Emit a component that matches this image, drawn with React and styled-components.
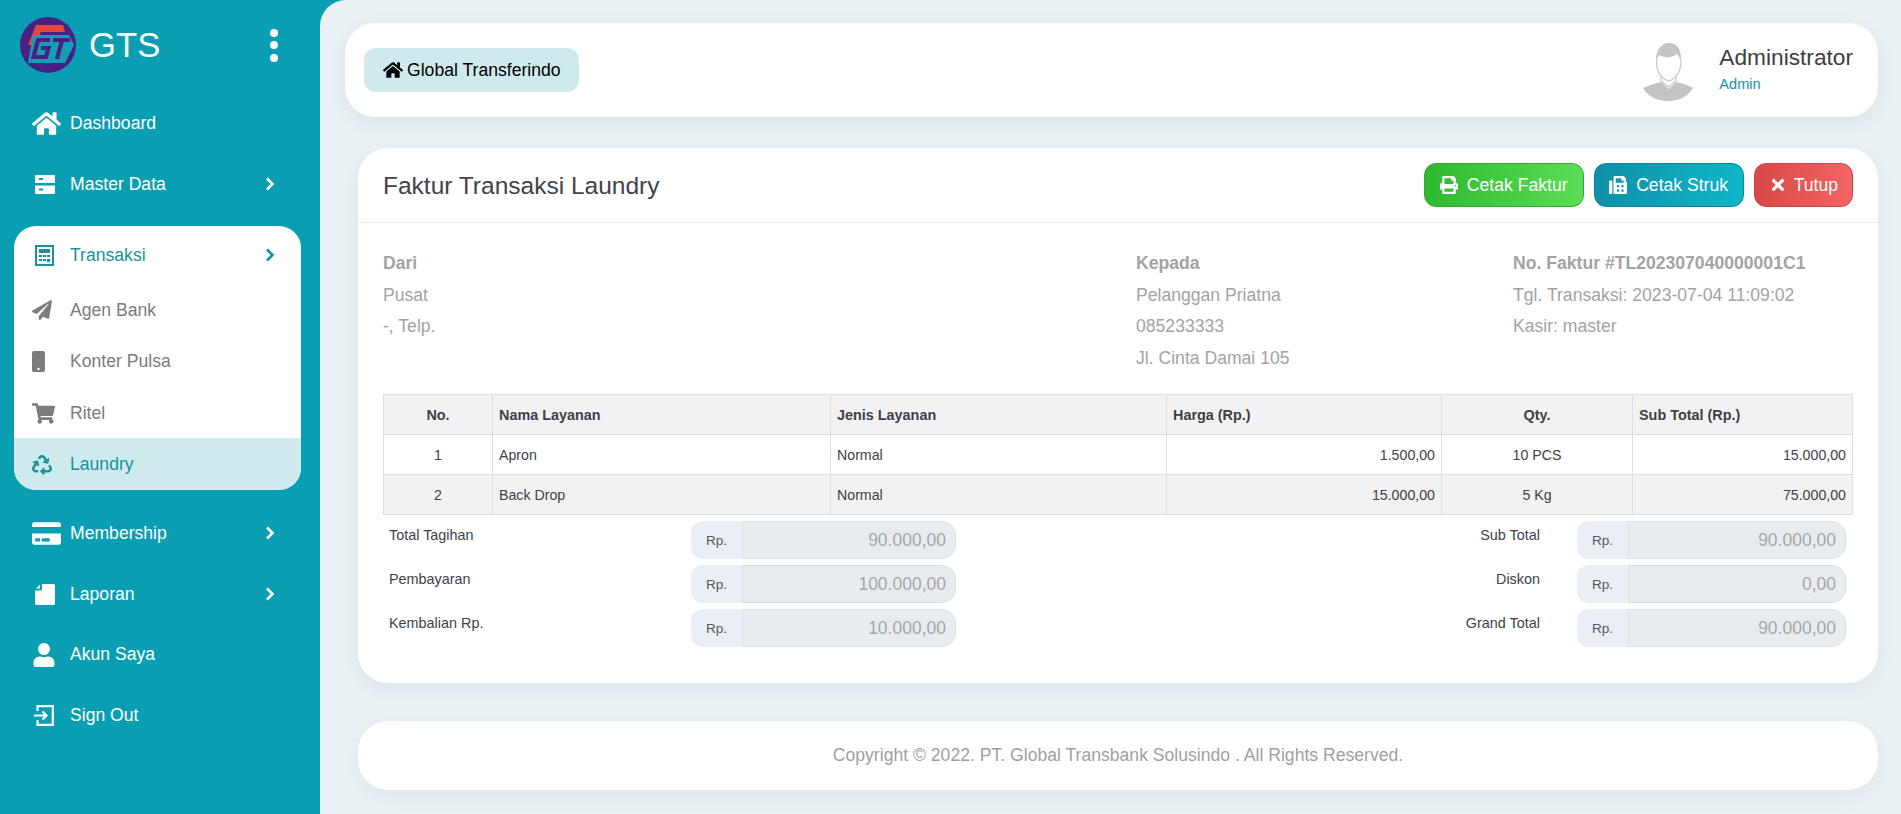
import React from "react";
import styled, { createGlobalStyle } from "styled-components";
import { FaHome, FaPaperPlane, FaShoppingCart, FaRecycle, FaCreditCard, FaUser, FaPrint, FaFax, FaTimes } from "react-icons/fa";

const Global = createGlobalStyle`
  html, body { margin: 0; padding: 0; background: #099eb1; }
  * { box-sizing: border-box; }
  body { font-family: "Liberation Sans", Arial, sans-serif; }
`;

const Shell = styled.div`
  display: flex;
  width: 1901px;
  height: 814px;
  background: #099eb1;
  overflow: hidden;
`;
const Sidebar = styled.aside`
  width: 320px;
  flex: none;
  display: flex;
  flex-direction: column;
  color: #fff;
`;
const Brand = styled.div`
  height: 90px;
  display: flex;
  align-items: center;
  padding: 0 42px 0 20px;
  gap: 13px;
`;
const BrandName = styled.span`
  font-size: 34.7px;
  flex: 1;
`;
const Kebab = styled.div`
  display: flex;
  flex-direction: column;
  gap: 4.5px;
`;
const Dot = styled.i`
  width: 8px;
  height: 8px;
  border-radius: 50%;
  background: #fff;
`;
const Nav = styled.nav`
  display: flex;
  flex-direction: column;
  padding-top: 2px;
`;
const NavItem = styled.div`
  height: 60.7px;
  display: flex;
  align-items: center;
  padding: 2px 45px 0 32px;
  font-size: 17.6px;
  color: #fff;
`;
const IconSlot = styled.span`
  width: 38px;
  flex: none;
  display: flex;
  align-items: center;
  padding-left: ${(p) => p.$inset || 0}px;
  svg { display: block; }
`;
const NavText = styled.span`
  flex: 1;
`;
const Group = styled.div`
  margin: 12.6px 19px 12px 14px;
  background: #fff;
  border-radius: 22px;
  overflow: hidden;
`;
const GroupHead = styled.div`
  height: 58px;
  display: flex;
  align-items: center;
  padding: 1px 26px 0 18px;
  font-size: 17.6px;
  color: #18929f;
`;
const SubItem = styled.div`
  height: 51.5px;
  display: flex;
  align-items: center;
  padding: 1px 26px 0 18px;
  font-size: 17.6px;
  color: ${(p) => (p.$active ? "#18929f" : "#7b7d7b")};
  background: ${(p) => (p.$active ? "#cfeaed" : "transparent")};
`;
const Main = styled.main`
  flex: 1;
  min-width: 0;
  background: #e9f1f5;
  border-top-left-radius: 26px;
  padding: 23px 23px 24px 25px;
  display: flex;
  flex-direction: column;
`;
const Topbar = styled.header`
  height: 94px;
  flex: none;
  background: #fff;
  border-radius: 30px;
  display: flex;
  align-items: center;
  justify-content: space-between;
  padding: 0 25px 0 19px;
  box-shadow: 0 6px 18px rgba(110, 150, 165, 0.14);
`;
const Crumb = styled.div`
  height: 44px;
  padding: 0 18px 0 19px;
  border-radius: 12px;
  background: #cfeaed;
  display: flex;
  align-items: center;
  gap: 4px;
  font-size: 17.6px;
  color: #000;
`;
const Profile = styled.div`
  display: flex;
  align-items: center;
  gap: 26px;
`;
const AvatarSlot = styled.div`
  margin-top: 4px;
  svg { display: block; }
`;
const ProfileText = styled.div`
  display: flex;
  flex-direction: column;
  gap: 5px;
  padding-bottom: 5px;
`;
const ProfileName = styled.span`
  font-size: 22.7px;
  color: #3b3e45;
`;
const ProfileRole = styled.span`
  font-size: 14.6px;
  color: #18929f;
`;
const Card = styled.section`
  height: 535px;
  flex: none;
  margin: 31px 0 0 13px;
  background: #fff;
  border-radius: 30px;
  box-shadow: 0 6px 18px rgba(110, 150, 165, 0.12);
`;
const CardHead = styled.div`
  height: 75px;
  display: flex;
  align-items: center;
  justify-content: space-between;
  padding: 0 25px;
  border-bottom: 1px solid #ececec;
`;
const CardTitle = styled.h1`
  margin: 2px 0 0;
  font-weight: 400;
  font-size: 24.5px;
  color: #3f434c;
`;
const Actions = styled.div`
  display: flex;
  gap: 10px;
`;
const ActionButton = styled.button`
  height: 44px;
  padding: 0 ${(p) => p.$pad}px;
  display: flex;
  align-items: center;
  gap: ${(p) => p.$gap}px;
  border-radius: 12px;
  border: 1px solid ${(p) => p.$edge};
  background: linear-gradient(90deg, ${(p) => p.$from}, ${(p) => p.$to});
  color: #fff;
  font: 17.6px "Liberation Sans", Arial, sans-serif;
`;
const CardBody = styled.div`
  padding: 25px 25px 0;
`;
const InvoiceInfo = styled.div`
  display: grid;
  grid-template-columns: 753px 377px 1fr;
  height: 146px;
  font-size: 17.6px;
  line-height: 31.7px;
  color: #a3a3a3;
`;
const InfoLine = styled.div`
  font-weight: ${(p) => (p.$bold ? 700 : 400)};
  white-space: nowrap;
`;
const Table = styled.table`
  width: 1469px;
  table-layout: fixed;
  border-collapse: collapse;
  font-size: 14.2px;
  color: #3e4148;
`;
const HeadCell = styled.th`
  height: 40px;
  padding: 0 6px;
  background: #f2f2f2;
  border: 1px solid #dedede;
  font-weight: 700;
  font-size: 14.4px;
  text-align: ${(p) => p.$align || "left"};
`;
const BodyRow = styled.tr`
  background: ${(p) => (p.$alt ? "#f2f2f2" : "#fff")};
`;
const BodyCell = styled.td`
  height: 40px;
  padding: 0 6px;
  border: 1px solid #dedede;
  text-align: ${(p) => p.$align || "left"};
`;
const Totals = styled.div`
  display: grid;
  grid-template-columns: 302px 265px 1fr 269px;
  grid-auto-rows: 38px;
  row-gap: 6px;
  margin: 6px 7px 0 6px;
`;
const LeftLabel = styled.div`
  font-size: 14.4px;
  line-height: 20px;
  padding-top: 4px;
  color: #3e4148;
`;
const RightLabel = styled(LeftLabel)`
  text-align: right;
  padding-right: 37px;
`;
const InputGroup = styled.div`
  display: flex;
  height: 100%;
`;
const Prefix = styled.span`
  width: ${(p) => p.$w}px;
  flex: none;
  display: flex;
  align-items: center;
  justify-content: center;
  font-size: 13.6px;
  color: #555a60;
  background: #e9eff5;
  border-radius: 12px 0 0 12px;
`;
const Amount = styled.input`
  flex: 1;
  min-width: 0;
  border: 1px solid #dde1e5;
  border-radius: 0 14px 14px 0;
  background: #e9ecef;
  padding: 0 9px;
  text-align: right;
  font: 17.5px "Liberation Sans", Arial, sans-serif;
  color: #a5a7a9;
  outline: none;
`;
const Footer = styled.footer`
  height: 69px;
  flex: none;
  margin: 38px 0 0 13px;
  background: #fff;
  border-radius: 30px;
  display: flex;
  align-items: center;
  justify-content: center;
  font-size: 17.6px;
  color: #a0a0a0;
  box-shadow: 0 6px 18px rgba(110, 150, 165, 0.1);
`;

const Chevron = () => (
  <svg width="10" height="14" viewBox="0 0 10 14" fill="none">
    <path d="M2 1.5 7.5 7 2 12.5" stroke="currentColor" strokeWidth="2.6" />
  </svg>
);
const Logo = () => (
  <svg width="56" height="56" viewBox="0 0 56 56">
    <circle cx="28" cy="28" r="28" fill="#472184" />
    <path d="M16 8H43L45 15H21L14 28H8Z" fill="#e4473f" />
    <path d="M13 18H49L54 28L45 46H8Z" fill="#149db3" />
    <path d="M30 23H18L13.5 40H26L28.5 31H21" fill="none" stroke="#472184" strokeWidth="4.2" />
    <path d="M33 23H50M42 23L37 42" fill="none" stroke="#472184" strokeWidth="4.2" />
  </svg>
);
const Avatar = () => (
  <svg width="50" height="58" viewBox="13 8 50 58" fill="#c4c4c4">
    <path d="M26 28C25 14 32 8 39 8C47 8 52 14 51 28C50 24 49 21 47 19C42 23 34 23 29 20C27 22 27 25 26 28Z" />
    <path d="M26.5 26C26 36 31 44 39 46C46 44 51 36 51 26" fill="none" stroke="#c4c4c4" strokeWidth="1.2" />
    <path d="M31 41V46L39 52L46 46V41" fill="none" stroke="#c4c4c4" strokeWidth="1.2" />
    <path d="M13 53C20 50 26 48 31 47L39 54L46 47C52 48 58 50 63 53C58 62 48 66 38 66C28 66 18 62 13 53Z" />
  </svg>
);
const ServerIcon = () => (
  <svg width="20" height="19" viewBox="0 0 20 19" fill="#fff">
    <path fillRule="evenodd" d="M1 0H19A1 1 0 0 1 20 1V8H0V1A1 1 0 0 1 1 0ZM4 3V5H8V3ZM0 10.5H20V18A1 1 0 0 1 19 19H1A1 1 0 0 1 0 18ZM4 13.5V15.5H8V13.5Z" />
  </svg>
);
const CalcIcon = () => (
  <svg width="20" height="21" viewBox="0 0 20 21" fill="currentColor">
    <path fillRule="evenodd" d="M0 0H19V21H0ZM2 2V19H17V2ZM4 4H15V8H4ZM4 10H7V12H4ZM8 10H11V12H8ZM12 10H15V12H12ZM4 14H7V16H4ZM8 14H11V16H8ZM12 14H15V17H12Z" />
  </svg>
);
const PhoneIcon = () => (
  <svg width="13" height="21" viewBox="0 0 13 21" fill="currentColor">
    <path fillRule="evenodd" d="M2 0H11A2 2 0 0 1 13 2V19A2 2 0 0 1 11 21H2A2 2 0 0 1 0 19V2A2 2 0 0 1 2 0ZM6.5 16.8A1.2 1.2 0 1 0 6.5 19.2A1.2 1.2 0 1 0 6.5 16.8Z" />
  </svg>
);
const FileIcon = () => (
  <svg width="20" height="21" viewBox="0 0 20 21" fill="#fff">
    <path d="M7 0H18.5A1.5 1.5 0 0 1 20 1.5V19.5A1.5 1.5 0 0 1 18.5 21H1.5A1.5 1.5 0 0 1 0 19.5V6.5H5.5A1.5 1.5 0 0 0 7 5ZM5 .8V4.5H1Z" />
  </svg>
);
const SignInIcon = () => (
  <svg width="20" height="21" viewBox="0 0 20 21" fill="none" stroke="#fff" strokeWidth="2.2">
    <path d="M3.5 6V1.2H18.8V19.8H3.5V15" />
    <path d="M0 10.5H12M8.5 6.5 12.5 10.5 8.5 14.5" />
  </svg>
);

const items = [
  ["Apron", "Normal", "1.500,00", "10 PCS", "15.000,00"],
  ["Back Drop", "Normal", "15.000,00", "5 Kg", "75.000,00"],
];
const columns = [109, 338, 336, 275, 191, 220];

const TotalsRow = ({ left, leftValue, right, rightValue }) => (
  <>
    <LeftLabel>{left}</LeftLabel>
    <InputGroup>
      <Prefix $w={51}>Rp.</Prefix>
      <Amount readOnly value={leftValue} />
    </InputGroup>
    <RightLabel>{right}</RightLabel>
    <InputGroup>
      <Prefix $w={51}>Rp.</Prefix>
      <Amount readOnly value={rightValue} />
    </InputGroup>
  </>
);

export default function App() {
  return (
    <Shell>
      <Global />
      <Sidebar>
        <Brand>
          <Logo />
          <BrandName>GTS</BrandName>
          <Kebab><Dot /><Dot /><Dot /></Kebab>
        </Brand>
        <Nav>
          <NavItem><IconSlot><FaHome size={29} /></IconSlot><NavText>Dashboard</NavText></NavItem>
          <NavItem><IconSlot $inset={3}><ServerIcon /></IconSlot><NavText>Master Data</NavText><Chevron /></NavItem>
          <Group>
            <GroupHead><IconSlot $inset={3}><CalcIcon /></IconSlot><NavText>Transaksi</NavText><Chevron /></GroupHead>
            <SubItem><IconSlot><FaPaperPlane size={20} /></IconSlot><NavText>Agen Bank</NavText></SubItem>
            <SubItem><IconSlot><PhoneIcon /></IconSlot><NavText>Konter Pulsa</NavText></SubItem>
            <SubItem><IconSlot><FaShoppingCart size={23} /></IconSlot><NavText>Ritel</NavText></SubItem>
            <SubItem $active><IconSlot><FaRecycle size={20} /></IconSlot><NavText>Laundry</NavText></SubItem>
          </Group>
          <NavItem><IconSlot><FaCreditCard size={29} /></IconSlot><NavText>Membership</NavText><Chevron /></NavItem>
          <NavItem><IconSlot $inset={3}><FileIcon /></IconSlot><NavText>Laporan</NavText><Chevron /></NavItem>
          <NavItem><IconSlot><FaUser size={24} /></IconSlot><NavText>Akun Saya</NavText></NavItem>
          <NavItem><IconSlot $inset={2}><SignInIcon /></IconSlot><NavText>Sign Out</NavText></NavItem>
        </Nav>
      </Sidebar>
      <Main>
        <Topbar>
          <Crumb><FaHome size={20} />Global Transferindo</Crumb>
          <Profile>
            <AvatarSlot><Avatar /></AvatarSlot>
            <ProfileText>
              <ProfileName>Administrator</ProfileName>
              <ProfileRole>Admin</ProfileRole>
            </ProfileText>
          </Profile>
        </Topbar>
        <Card>
          <CardHead>
            <CardTitle>Faktur Transaksi Laundry</CardTitle>
            <Actions>
              <ActionButton $pad={15} $gap={9} $from="#2fb92f" $to="#5ade55" $edge="#35a535"><FaPrint size={18} />Cetak Faktur</ActionButton>
              <ActionButton $pad={14.6} $gap={9} $from="#0f90a6" $to="#0fb6ca" $edge="#0d8599"><FaFax size={18} />Cetak Struk</ActionButton>
              <ActionButton $pad={14} $gap={7} $from="#d94848" $to="#f36464" $edge="#c94545"><FaTimes size={18} />Tutup</ActionButton>
            </Actions>
          </CardHead>
          <CardBody>
            <InvoiceInfo>
              <div>
                <InfoLine $bold>Dari</InfoLine>
                <InfoLine>Pusat</InfoLine>
                <InfoLine>-, Telp.</InfoLine>
              </div>
              <div>
                <InfoLine $bold>Kepada</InfoLine>
                <InfoLine>Pelanggan Priatna</InfoLine>
                <InfoLine>085233333</InfoLine>
                <InfoLine>Jl. Cinta Damai 105</InfoLine>
              </div>
              <div>
                <InfoLine $bold>No. Faktur #TL202307040000001C1</InfoLine>
                <InfoLine>Tgl. Transaksi: 2023-07-04 11:09:02</InfoLine>
                <InfoLine>Kasir: master</InfoLine>
              </div>
            </InvoiceInfo>
            <Table>
              <colgroup>
                {columns.map((w, i) => <col key={i} style={{ width: w }} />)}
              </colgroup>
              <thead>
                <tr>
                  <HeadCell $align="center">No.</HeadCell>
                  <HeadCell>Nama Layanan</HeadCell>
                  <HeadCell>Jenis Layanan</HeadCell>
                  <HeadCell>Harga (Rp.)</HeadCell>
                  <HeadCell $align="center">Qty.</HeadCell>
                  <HeadCell>Sub Total (Rp.)</HeadCell>
                </tr>
              </thead>
              <tbody>
                {items.map((r, i) => (
                  <BodyRow key={r[0]} $alt={i % 2 === 1}>
                    <BodyCell $align="center">{i + 1}</BodyCell>
                    <BodyCell>{r[0]}</BodyCell>
                    <BodyCell>{r[1]}</BodyCell>
                    <BodyCell $align="right">{r[2]}</BodyCell>
                    <BodyCell $align="center">{r[3]}</BodyCell>
                    <BodyCell $align="right">{r[4]}</BodyCell>
                  </BodyRow>
                ))}
              </tbody>
            </Table>
            <Totals>
              <TotalsRow left="Total Tagihan" leftValue="90.000,00" right="Sub Total" rightValue="90.000,00" />
              <TotalsRow left="Pembayaran" leftValue="100.000,00" right="Diskon" rightValue="0,00" />
              <TotalsRow left="Kembalian Rp." leftValue="10.000,00" right="Grand Total" rightValue="90.000,00" />
            </Totals>
          </CardBody>
        </Card>
        <Footer>Copyright © 2022. PT. Global Transbank Solusindo . All Rights Reserved.</Footer>
      </Main>
    </Shell>
  );
}
